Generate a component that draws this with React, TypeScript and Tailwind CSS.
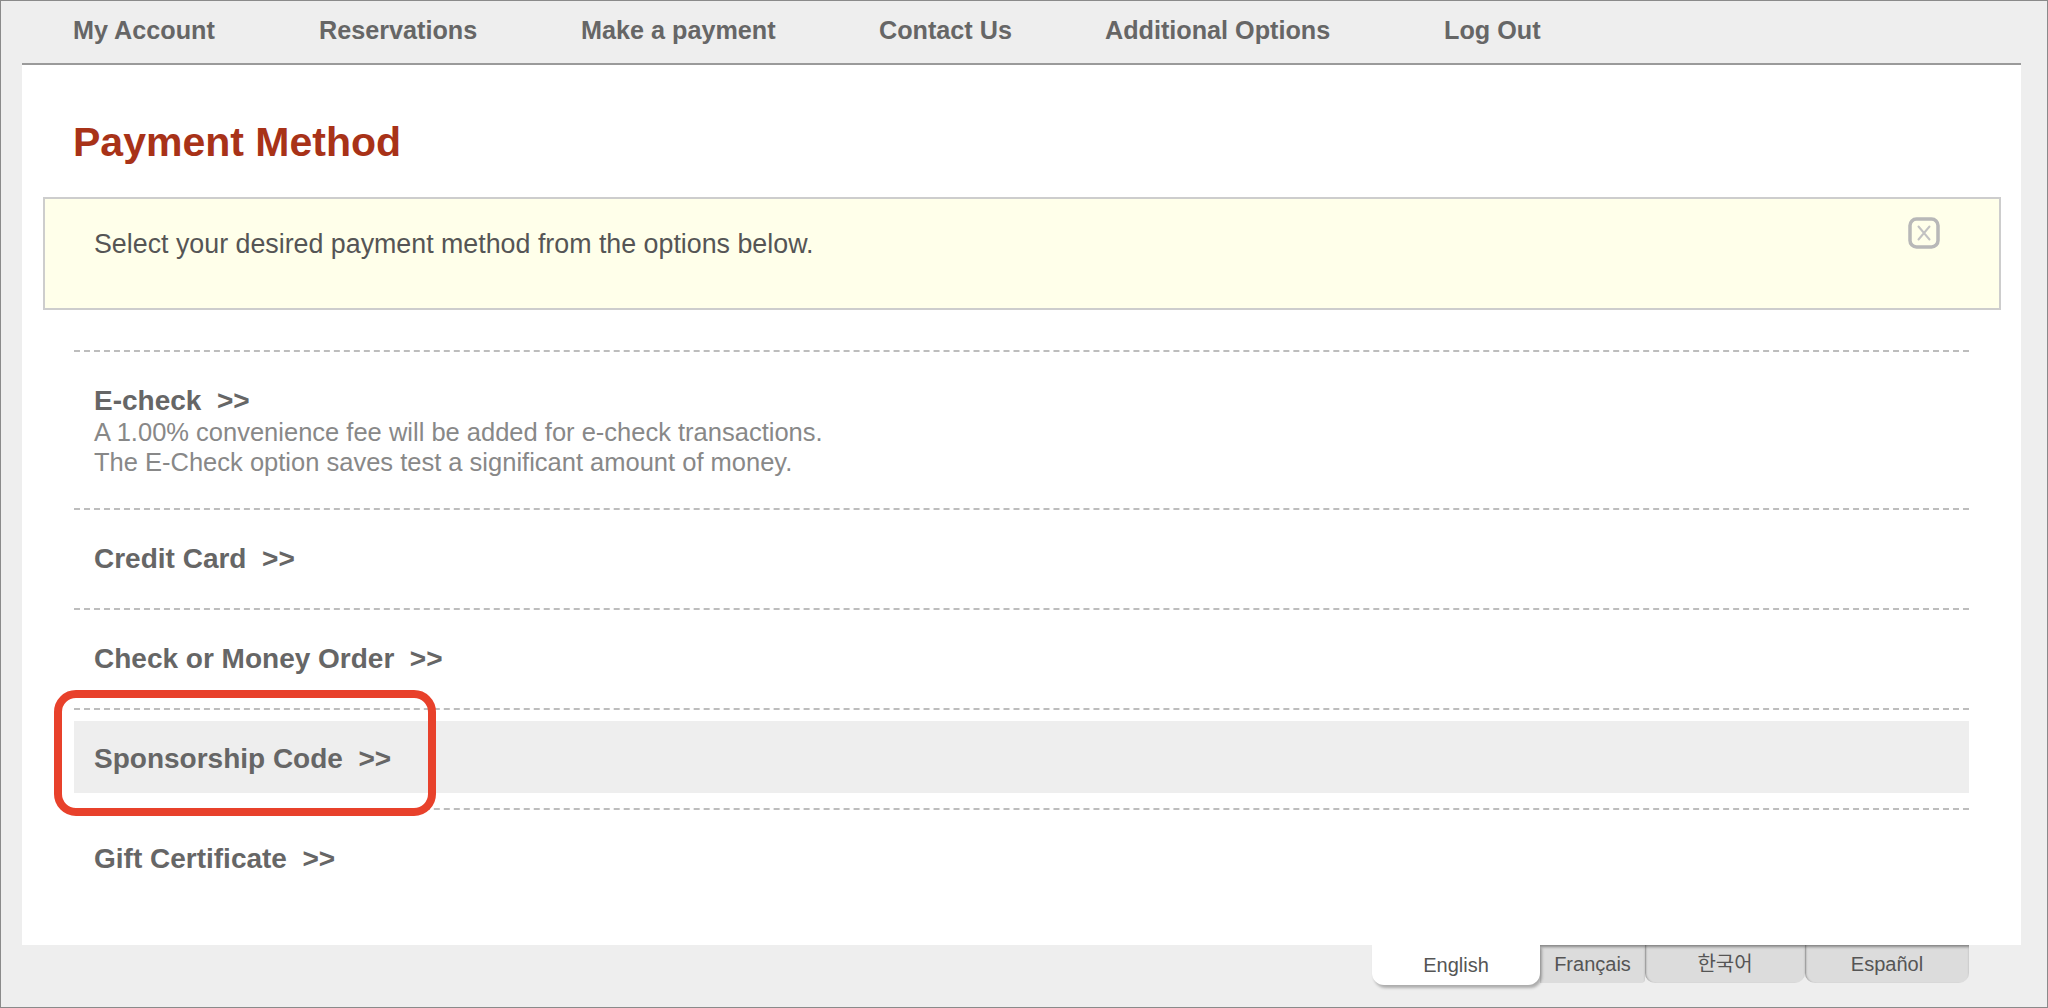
import React from 'react';

const NAV = [
  { label: 'My Account', w: 'w-[246px]' },
  { label: 'Reservations', w: 'w-[262px]' },
  { label: 'Make a payment', w: 'w-[298px]' },
  { label: 'Contact Us', w: 'w-[226px]' },
  { label: 'Additional Options', w: 'w-[339px]' },
  { label: 'Log Out', w: 'w-[200px]' },
];

const METHODS = [
  {
    title: 'E-check',
    lines: [
      'A 1.00% convenience fee will be added for e-check transactions.',
      'The E-Check option saves test a significant amount of money.',
    ],
  },
  { title: 'Credit Card' },
  { title: 'Check or Money Order' },
  { title: 'Sponsorship Code', active: true },
  { title: 'Gift Certificate' },
];

const CloseIcon = () => (
  <svg width="32" height="32" viewBox="0 0 32 32" className="shrink-0">
    <rect x="2" y="2" width="28" height="28" rx="6.5" fill="none" stroke="#b8b8b8" strokeWidth="3.5" />
    <path d="M10.5 9.5 L21.5 22.5 M21.5 9.5 L10.5 22.5" stroke="#c2c2c2" strokeWidth="2" strokeLinecap="round" />
  </svg>
);

const App: React.FC = () => {
  return (
    <div className="relative flex h-[1008px] w-[2048px] flex-col overflow-hidden border border-[#8a8a8a] bg-[#eeeeee] font-['Liberation_Sans','Noto_Sans_CJK_KR',Arial,sans-serif]">
      {/* Top navigation */}
      <nav className="flex h-[62px] shrink-0 items-center pb-[3px] pl-[72px]">
        {NAV.map(item => (
          <a key={item.label} className={`${item.w} shrink-0 text-[25.2px] font-bold text-[#666666]`}>
            {item.label}
          </a>
        ))}
      </nav>

      {/* Main panel */}
      <div className="ml-[21px] h-[882px] w-[1999px] shrink-0 border-t-2 border-[#9a9a9a] bg-white">
        <h1 className="ml-[51px] mt-[54px] text-[41px] font-bold leading-[46px] text-[#a83218]">Payment Method</h1>

        <div className="ml-[21px] mr-[20px] mt-[32px] flex h-[113px] items-start justify-between border-2 border-[#cdcdcd] bg-[#ffffea] pl-[49px] pr-[59px] pt-[18px]">
          <p className="mt-[12px] text-[26.8px] leading-[31px] text-[#555555]">
            Select your desired payment method from the options below.
          </p>
          <CloseIcon />
        </div>

        <div className="mx-[52px] mt-[40px]">
          {METHODS.map(m => (
            <div
              key={m.title}
              className={`border-t-2 border-dashed border-[#bdbdbd] pt-[11px] ${m.lines ? 'pb-[13px]' : 'pb-[15px]'}`}
            >
              <div className={`px-[20px] pb-[18px] pt-[22px] ${m.active ? 'bg-[#eeeeee]' : ''}`}>
                <div className="text-[28px] font-bold leading-[32px] text-[#666666]">
                  {m.title}&nbsp;&nbsp;&gt;&gt;
                </div>
                {m.lines && (
                  <div className="text-[25.5px] leading-[30px] text-[#888888]">
                    {m.lines.map(l => (
                      <div key={l}>{l}</div>
                    ))}
                  </div>
                )}
              </div>
            </div>
          ))}
        </div>
      </div>

      {/* Language tabs */}
      <div className="ml-[21px] flex w-[1999px] shrink-0 justify-end pr-[52px]">
        <div className="flex items-start text-[20px] text-[#555555]">
          <div className="relative z-10 flex h-[40px] w-[168px] items-center justify-center rounded-b-[12px] bg-white shadow-[2px_3px_3px_rgba(0,0,0,0.28)]">
            English
          </div>
          <div className="flex h-[38px] w-[105px] items-center justify-center rounded-br-[4px] bg-[#dcdcdc] shadow-[inset_0_3px_3px_-1px_rgba(0,0,0,0.4)]">
            Français
          </div>
          <div className="flex h-[38px] w-[160px] items-center justify-center rounded-b-[10px] bg-[#dcdcdc] shadow-[inset_0_3px_3px_-1px_rgba(0,0,0,0.4),inset_2px_0_2px_-1px_rgba(0,0,0,0.3)]">
            한국어
          </div>
          <div className="flex h-[38px] w-[164px] items-center justify-center rounded-b-[10px] bg-[#dcdcdc] shadow-[inset_0_3px_3px_-1px_rgba(0,0,0,0.4),inset_2px_0_2px_-1px_rgba(0,0,0,0.3)]">
            Español
          </div>
        </div>
      </div>

      {/* Annotation highlight */}
      <div className="pointer-events-none absolute left-[53px] top-[689px] h-[126px] w-[382px] rounded-[22px] border-[8px] border-[#e8412b]" />
    </div>
  );
};

export default App;
